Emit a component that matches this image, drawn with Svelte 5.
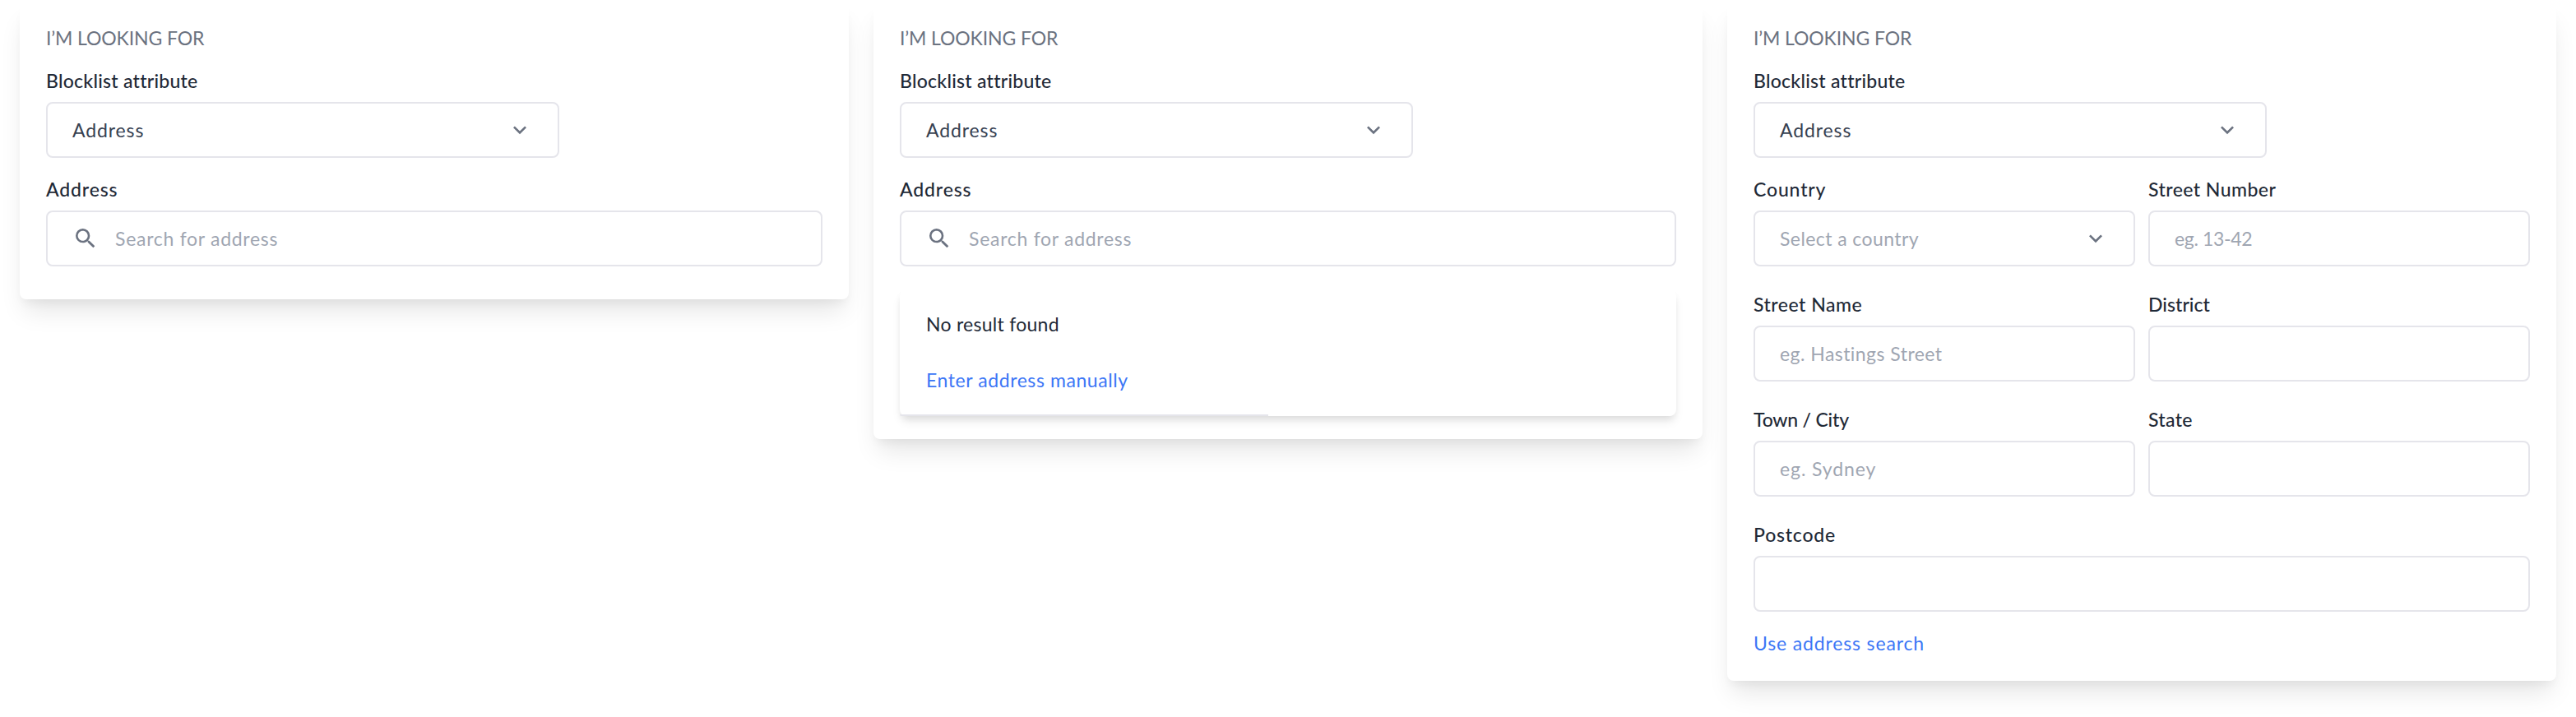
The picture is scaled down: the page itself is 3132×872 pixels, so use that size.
<script>
  const manualRows = [
    [
      { label: 'Country', hint: 'Select a country', select: true, ls: 0.85, hls: 0.42 },
      { label: 'Street Number', hint: 'eg. 13-42', ls: 0.45, hls: -0.35 }
    ],
    [
      { label: 'Street Name', hint: 'eg. Hastings Street', ls: 0.5, hls: 0.45 },
      { label: 'District', hint: '', ls: 0.05, hls: 0 }
    ],
    [
      { label: 'Town / City', hint: 'eg. Sydney', ls: -0.2, hls: 0.9 },
      { label: 'State', hint: '', ls: 0.35, hls: 0 }
    ],
    [{ label: 'Postcode', hint: '', ls: 0.8, hls: 0 }]
  ];
</script>

{#snippet chevron()}
  <svg class="icon" viewBox="0 0 24 24" aria-hidden="true">
    <path d="M16.59 8.59 12 13.17 7.41 8.59 6 10l6 6 6-6z" />
  </svg>
{/snippet}

{#snippet heading()}
  <h2 class="title"><span>I’M LOOKING FOR</span></h2>
  <div class="label attribute-label"><span>Blocklist attribute</span></div>
  <div class="box attribute">
    <span class="value">Address</span>
    {@render chevron()}
  </div>
{/snippet}

{#snippet search()}
  <div class="label next"><span>Address</span></div>
  <div class="box">
    <svg class="icon" viewBox="0 0 24 24" aria-hidden="true">
      <path d="M15.5 14h-.79l-.28-.27A6.471 6.471 0 0 0 16 9.5 6.5 6.5 0 1 0 9.5 16c1.61 0 3.09-.59 4.23-1.57l.27.28v.79l5 4.99L20.49 19l-4.99-5zm-6 0C7.01 14 5 11.99 5 9.5S7.01 5 9.5 5 14 7.01 14 9.5 11.99 14 9.5 14z" />
    </svg>
    <span class="hint after-icon">Search for address</span>
  </div>
{/snippet}

<main>
  <section class="card first">
    {@render heading()}
    {@render search()}
  </section>

  <section class="card second">
    {@render heading()}
    {@render search()}
    <div class="results">
      <div class="row empty"><span>No result found</span></div>
      <div class="row link"><span>Enter address manually</span></div>
      <div class="rule"></div>
    </div>
  </section>

  <section class="card third">
    {@render heading()}
    {#each manualRows as row, i}
      <div class="fields" class:spaced={i > 0}>
        {#each row as f}
          <div class="field">
            <div class="label"><span style="letter-spacing: {f.ls}px">{f.label}</span></div>
            <div class="box">
              <span class="hint" style="letter-spacing: {f.hls}px">{f.hint}</span>
              {#if f.select}{@render chevron()}{/if}
            </div>
          </div>
        {/each}
      </div>
    {/each}
    <div class="link back"><span>Use address search</span></div>
  </section>
</main>

<style>
  :global(body) {
    background: #fff;
  }
  main {
    box-sizing: border-box;
    width: 3132px;
    height: 872px;
    padding: 4px 24px 0;
    display: flex;
    align-items: flex-start;
    gap: 30px;
    overflow: hidden;
    font-family: Lato, 'Open Sans', sans-serif;
    font-size: 23px;
    line-height: 32px;
    color: #1f2a37;
    white-space: nowrap;
  }
  .card {
    box-sizing: border-box;
    flex: none;
    width: 1008px;
    padding: 26px 32px 0;
    border-radius: 8px;
    background: #fff;
    box-shadow: 0 20px 30px -6px rgba(0, 0, 0, 0.1), 0 8px 12px -4px rgba(0, 0, 0, 0.05);
  }
  .first {
    height: 360px;
  }
  .second {
    height: 530px;
  }
  .third {
    height: 824px;
  }
  .title {
    margin: 0 0 20px;
    font-size: 23px;
    font-weight: 400;
    line-height: 32px;
    letter-spacing: -0.12px;
    color: #6b7280;
  }
  .label {
    margin-bottom: 10px;
    font-weight: 500;
  }
  .attribute-label {
    letter-spacing: 0.26px;
  }
  .next,
  .fields {
    margin-top: 22px;
  }
  .next {
    letter-spacing: 0.85px;
  }
  .spaced {
    margin-top: 30px;
  }
  .fields {
    display: flex;
    gap: 16px;
  }
  .field {
    flex: 1 1 0;
  }
  .box {
    box-sizing: border-box;
    height: 68px;
    padding: 0 30px;
    display: flex;
    align-items: center;
    border: 2px solid #e5e5eb;
    border-radius: 8px;
  }
  .attribute {
    width: 624px;
  }
  .value {
    flex: 1;
    letter-spacing: 0.9px;
    color: #374151;
  }
  .hint {
    flex: 1;
    color: #9fa6b2;
  }
  .after-icon {
    margin-left: 20px;
    letter-spacing: 0.72px;
  }
  .icon {
    flex: none;
    width: 32px;
    height: 32px;
    fill: #6b7280;
  }
  .results {
    box-sizing: border-box;
    height: 154px;
    margin-top: 28px;
    padding-top: 8px;
    display: flex;
    flex-direction: column;
    border-radius: 8px;
    background: #fff;
    box-shadow: 0 8px 12px -2px rgba(0, 0, 0, 0.1), 0 4px 8px -2px rgba(0, 0, 0, 0.06);
  }
  .row {
    height: 68px;
    padding: 0 32px;
    display: flex;
    align-items: center;
    letter-spacing: 0.58px;
  }
  .empty {
    letter-spacing: 0.27px;
  }
  .rule {
    width: 448px;
    height: 2px;
    margin-top: auto;
    border-bottom-left-radius: 8px;
    background: #e5e5eb;
  }
  .link {
    color: #3b76f6;
  }
  .back {
    margin-top: 22px;
    letter-spacing: 0.85px;
  }
</style>
